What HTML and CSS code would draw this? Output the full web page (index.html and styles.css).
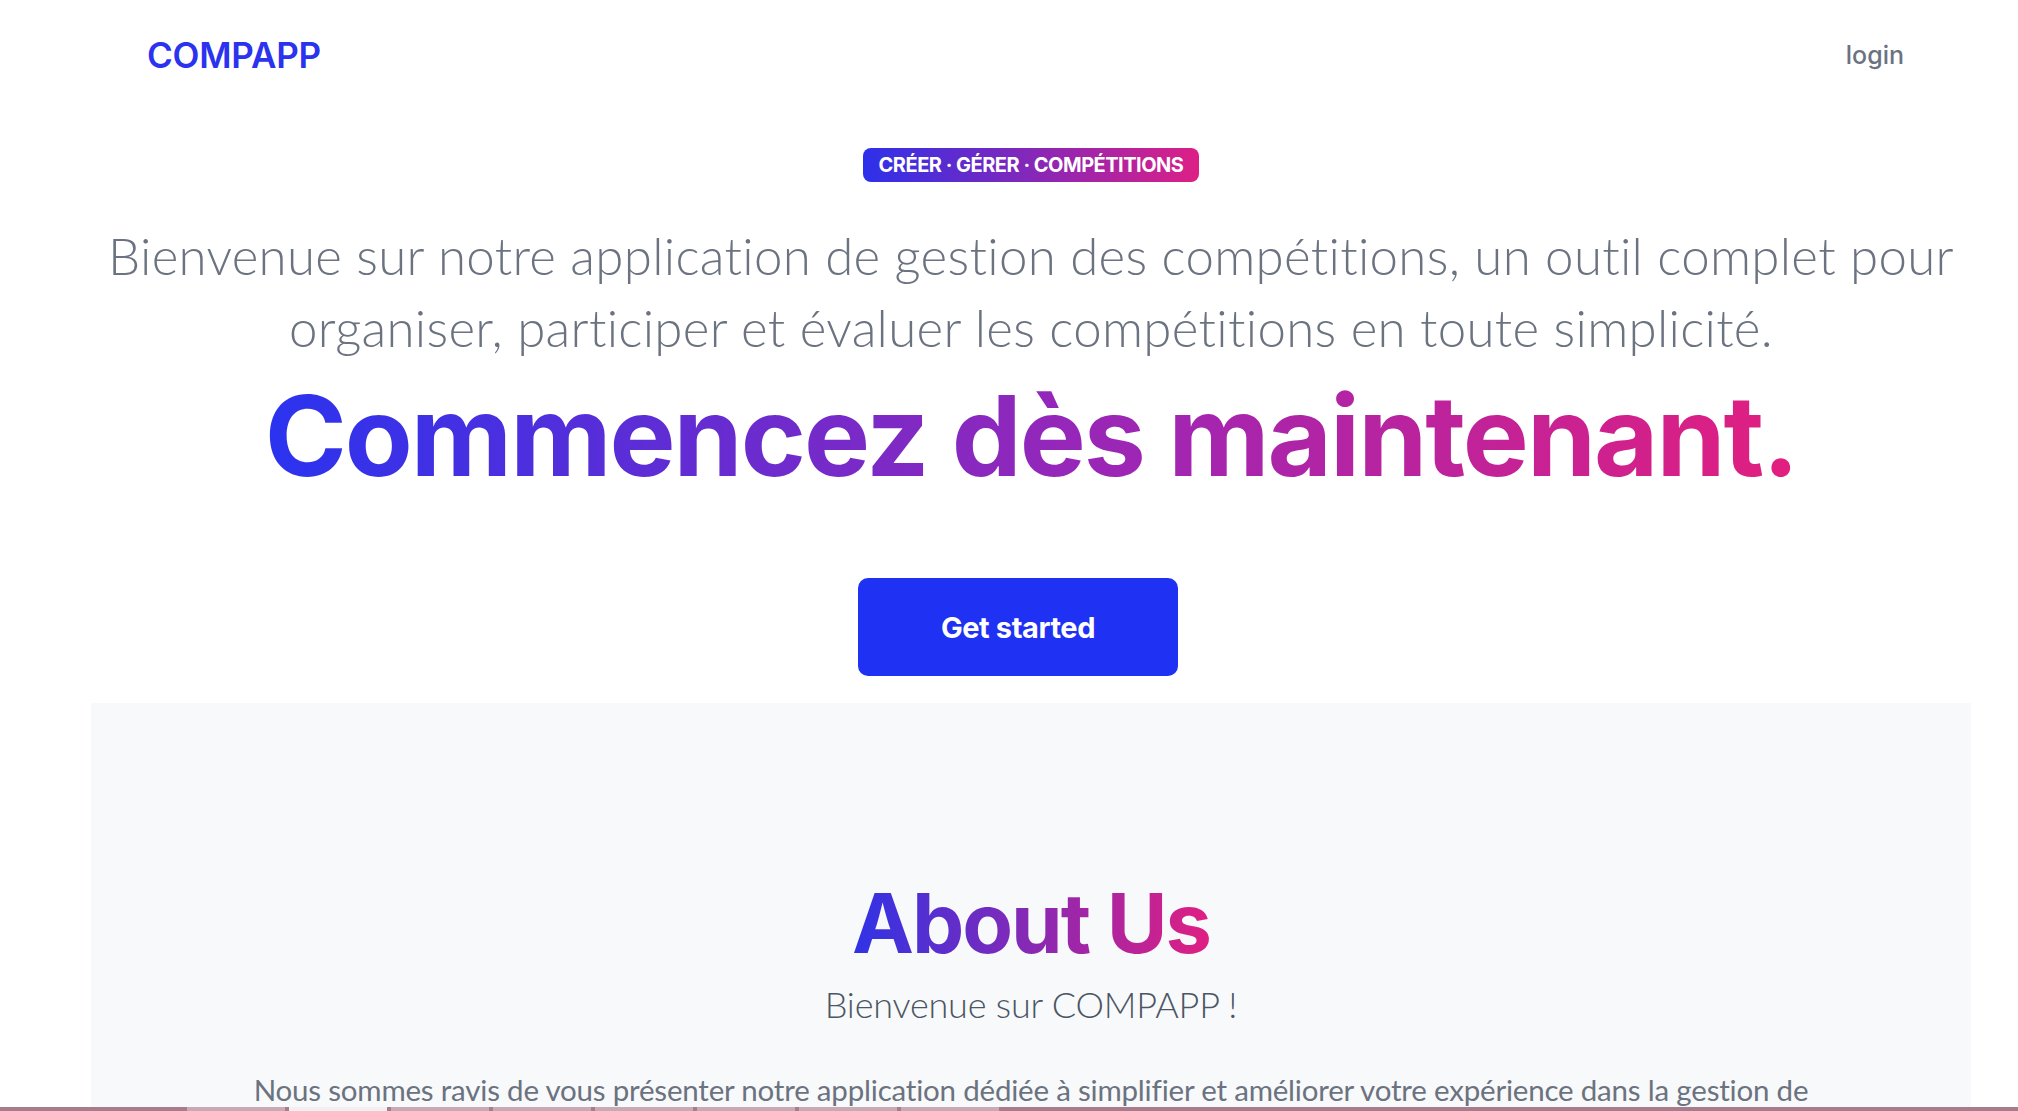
FILE: index.html
```html
<!DOCTYPE html>
<html lang="fr">
<head>
<meta charset="utf-8">
<title>COMPAPP</title>
<link rel="stylesheet" href="styles.css">
</head>
<body>
<div class="page">
  <header class="nav">
    <a class="logo" href="#">COMPAPP</a>
    <a class="login" href="#">login</a>
  </header>
  <section class="hero">
    <span class="badge">CRÉER · GÉRER · COMPÉTITIONS</span>
    <p class="lead">Bienvenue sur notre application de gestion des compétitions, un outil complet pour organiser, participer et évaluer les compétitions en toute simplicité.</p>
    <h1 class="headline">Commencez dès maintenant.</h1>
    <a class="cta" href="#">Get started</a>
  </section>
  <section class="about">
    <h2 class="about-title">About Us</h2>
    <p class="about-sub">Bienvenue sur COMPAPP !</p>
    <p class="about-text">Nous sommes ravis de vous présenter notre application dédiée à simplifier et améliorer votre expérience dans la gestion de compétitions.</p>
  </section>
</div>
<div class="taskbar">
  <span class="tab"></span><span class="tab light"></span><span class="tab"></span><span class="tab"></span><span class="tab"></span><span class="tab"></span><span class="tab"></span><span class="tab"></span>
</div>
</body>
</html>
```
FILE: styles.css
```css
* { box-sizing: border-box; }
html, body { margin: 0; padding: 0; background: #fff; }
body { font-family: "Lato", "Inter", sans-serif; overflow: hidden; }
a { text-decoration: none; }

.page { padding: 0 47px 0 91px; }

.nav {
  display: flex;
  justify-content: space-between;
  align-items: center;
  height: 110px;
  padding: 0 67px 0 56px;
}
.logo {
  font-family: "Inter", sans-serif;
  font-weight: 600;
  font-size: 35px;
  color: #2b33ef;
  letter-spacing: -0.2px;
}
.login {
  font-family: "Inter", sans-serif;
  font-weight: 500;
  font-size: 25px;
  color: #6b7280;
}

.hero {
  display: flex;
  flex-direction: column;
  align-items: center;
  text-align: center;
  padding-top: 38px;
  padding-bottom: 27px;
}
.badge {
  display: inline-block;
  height: 34px;
  line-height: 34px;
  padding: 0 16px;
  border-radius: 8px;
  background: linear-gradient(90deg, #2d30ea, #dd1f86);
  color: #fff;
  font-family: "Inter", sans-serif;
  font-weight: 700;
  font-size: 20px;
  letter-spacing: -0.5px;
}
.lead {
  margin: 38px 0 0;
  font-family: "Lato", sans-serif;
  font-weight: 300;
  font-size: 51px;
  line-height: 72px;
  color: #6b7280;
  letter-spacing: 0.3px;
  max-width: 1880px;
}
.headline {
  margin: -3px 0 0;
  font-family: "Inter", sans-serif;
  font-weight: 700;
  font-size: 111px;
  line-height: 150px;
  letter-spacing: -2px;
  background: linear-gradient(90deg, #2a33ef 0%, #9b26b6 55%, #e21f7f 100%);
  -webkit-background-clip: text;
  background-clip: text;
  color: transparent;
}
.cta {
  margin-top: 67px;
  margin-right: 26px;
  width: 320px;
  height: 98px;
  display: flex;
  align-items: center;
  justify-content: center;
  border-radius: 10px;
  background: #1f31f2;
  color: #fff;
  font-family: "Inter", sans-serif;
  font-weight: 700;
  font-size: 29px;
  letter-spacing: -0.4px;
}

.about {
  background: #f8f9fa;
  text-align: center;
  padding: 170px 110px 40px;
}
.about-title {
  margin: 0;
  display: inline-block;
  font-family: "Inter", sans-serif;
  font-weight: 700;
  font-size: 83px;
  line-height: 100px;
  letter-spacing: -2px;
  background: linear-gradient(90deg, #2f33e6, #e01f82);
  -webkit-background-clip: text;
  background-clip: text;
  color: transparent;
}
.about-sub {
  margin: 9px 0 0;
  font-family: "Lato", sans-serif;
  font-weight: 300;
  font-size: 36px;
  color: #4b5563;
  letter-spacing: -0.2px;
}
.about-text {
  margin: 44px 0 0;
  font-family: "Lato", sans-serif;
  font-weight: 400;
  font-size: 29.5px;
  line-height: 40px;
  color: #6b7280;
  letter-spacing: -0.2px;
}

.taskbar {
  position: fixed;
  left: 0; right: 0; bottom: 0;
  height: 4px;
  background: #a87c8c;
  display: flex;
  gap: 4px;
  padding-left: 187px;
}
.tab { width: 98px; height: 4px; background: #c9a9b4; }
.tab.light { background: #f3eef0; }
```
